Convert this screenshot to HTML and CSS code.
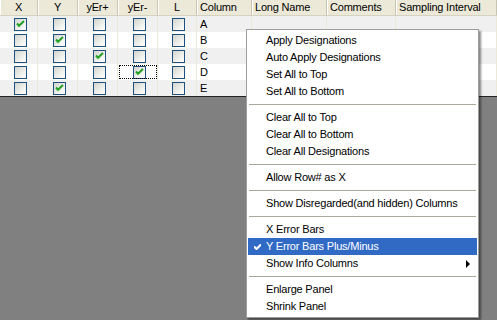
FILE: index.html
```html
<!DOCTYPE html>
<html lang="en">
  <head>
    <meta charset="UTF-8" />
    <title>Column Designations</title>
    <link rel="stylesheet" href="styles.css">
  </head>
  <body>
    <div class="sheet">
      <div class="grid">
        <div class="hd c">X</div>
        <div class="hd c">Y</div>
        <div class="hd c">yEr+</div>
        <div class="hd c">yEr-</div>
        <div class="hd c">L</div>
        <div class="hd">Column</div>
        <div class="hd">Long Name</div>
        <div class="hd">Comments</div>
        <div class="hd">Sampling Interval</div>
      </div>
      <div id="rows"></div>
    </div>

    <!-- context menu over the grid -->
    <div class="menu">
      <div class="item">Apply Designations</div>
      <div class="item">Auto Apply Designations</div>
      <div class="item">Set All to Top</div>
      <div class="item">Set All to Bottom</div>
      <div class="sep"></div>
      <div class="item">Clear All to Top</div>
      <div class="item">Clear All to Bottom</div>
      <div class="item">Clear All Designations</div>
      <div class="sep"></div>
      <div class="item">Allow Row# as X</div>
      <div class="sep"></div>
      <div class="item">Show Disregarded(and hidden) Columns</div>
      <div class="sep"></div>
      <div class="item">X Error Bars</div>
      <div class="item active">
        <svg class="tick" width="7" height="7" viewBox="0 0 7 7"><path d="M0 3v2l2 2h1l4-4V1h-1L2.5 4.5 1 3z" fill="#fff"/></svg>
        Y Error Bars Plus/Minus
      </div>
      <div class="item">Show Info Columns<span class="arrow"></span></div>
      <div class="sep"></div>
      <div class="item">Enlarge Panel</div>
      <div class="item">Shrink Panel</div>
    </div>

    <script>
      // which designation column is checked for each row
      const data = [
        { name: "A", on: 0 },
        { name: "B", on: 1 },
        { name: "C", on: 2 },
        { name: "D", on: 3, focus: true },
        { name: "E", on: 1 },
      ];
      const tick =
        '<svg width="9" height="8" viewBox="0 0 9 8"><path d="M1 3.5l2 2.2L8 1" stroke="#21a121" stroke-width="2" fill="none"/></svg>';
      const rows = document.getElementById("rows");
      data.forEach((r, i) => {
        let html = `<div class="grid row ${i % 2 ? "odd" : "even"}">`;
        for (let c = 0; c < 5; c++) {
          const box = `<span class="box">${c === r.on ? tick : ""}</span>`;
          html += `<div class="cell c${r.focus && c === r.on ? " focus" : ""}">${box}</div>`;
        }
        html += `<div class="cell">${r.name}</div><div class="cell"></div><div class="cell"></div><div class="cell"></div></div>`;
        rows.innerHTML += html;
      });
    </script>
  </body>
</html>
```

FILE: styles.css
```css
body {
  margin: 0;
  background-color: #808080;
  font-family: "Liberation Sans", Arial, sans-serif;
  font-size: 11px;
  letter-spacing: -0.2px;
  color: #000;
  width: 497px;
  height: 320px;
  overflow: hidden;
  position: relative;
}

.sheet {
  background-color: #fff;
  border-bottom: 1px solid #222;
}

.grid {
  display: grid;
  grid-template-columns: 38px 40px 40px 40px 39px 55px 75px 69px 1fr;
}

.hd {
  height: 15px;
  line-height: 15px;
  background-color: #ece9d8;
  border-bottom: 1px solid #d6d2c2;
  border-right: 1px solid #c7c4b2;
  box-shadow: inset 1px 0 0 #fff;
  padding-left: 3px;
  white-space: nowrap;
  overflow: hidden;
}

.hd.c,
.cell.c {
  padding-left: 0;
  text-align: center;
  display: flex;
  align-items: center;
  justify-content: center;
}

.row .cell {
  height: 16px;
  line-height: 16px;
  border-right: 1px solid #ebe8da;
  box-sizing: border-box;
  padding-left: 3px;
}

.row.even .cell {
  background-color: #f0f0f0;
}

.row.odd .cell {
  background-color: #fff;
}

.cell.focus {
  outline: 1px dotted #000;
  outline-offset: -2px;
}

.box {
  width: 11px;
  height: 11px;
  border: 1px solid #1c5180;
  background: linear-gradient(135deg, #d4d4ce 0%, #f4f4f2 70%, #fff 100%);
  display: flex;
  align-items: center;
  justify-content: center;
}

.menu {
  position: absolute;
  left: 246px;
  top: 29px;
  width: 231px;
  padding: 2px 0;
  background-color: #fff;
  border: 1px solid #9d9d9d;
  box-shadow: 2px 2px 2px rgba(0, 0, 0, 0.45);
}

.item {
  position: relative;
  height: 17px;
  line-height: 17px;
  margin: 0 1px;
  padding-left: 18px;
  white-space: nowrap;
}

.item.active {
  background-color: #316ac5;
  color: #fff;
}

.tick {
  position: absolute;
  left: 6px;
  top: 5px;
}

.arrow {
  position: absolute;
  right: 7px;
  top: 5px;
  border-left: 4px solid #000;
  border-top: 4px solid transparent;
  border-bottom: 4px solid transparent;
}

.sep {
  height: 1px;
  margin: 4px 2px 4px 2px;
  background-color: #aca899;
}
```
